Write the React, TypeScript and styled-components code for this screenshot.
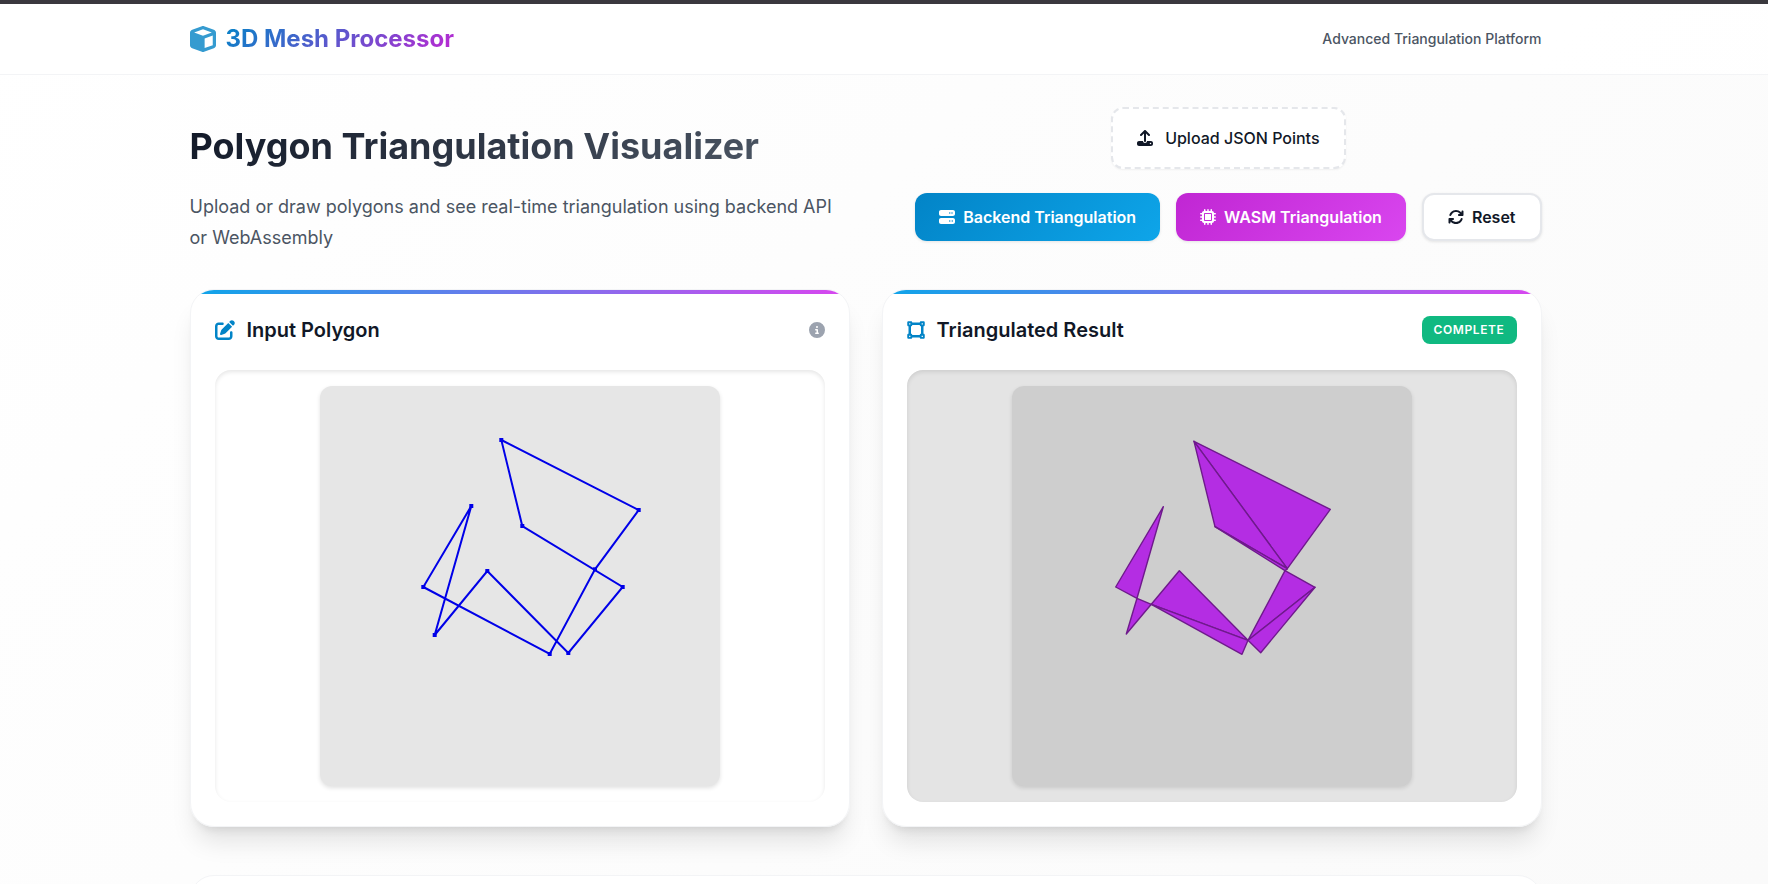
import React from "react";
import styled, { createGlobalStyle, css } from "styled-components";
import {
  FaArrowsRotate,
  FaCircleInfo,
  FaCube,
  FaMicrochip,
  FaPenToSquare,
  FaServer,
  FaUpload,
  FaVectorSquare,
} from "react-icons/fa6";

const GlobalStyle = createGlobalStyle`
  *, *::before, *::after { box-sizing: border-box; }
  body {
    margin: 0;
    font-family: Inter, "Liberation Sans", sans-serif;
    font-size: 16px;
    line-height: 1.6;
    color: #111827;
    background: #fdfdfd;
  }
  h1, h2, p { margin: 0; }
`;

const Page = styled.div`
  height: 100vh;
  min-height: 600px;
  overflow: hidden;
  border-top: 4px solid #3a383e;
  background: linear-gradient(135deg, #ffffff 0%, #fafafa 100%);
`;

const Header = styled.header`
  padding-right: 37px;
  background: rgba(255, 255, 255, 0.8);
  border-bottom: 1px solid #f3f4f6;
`;

const Container = styled.div`
  max-width: 1400px;
  margin: 0 auto;
  padding: 0 24px;
`;

const HeaderRow = styled(Container)`
  display: flex;
  align-items: center;
  justify-content: space-between;
  min-height: 70px;
`;

const Brand = styled.div`
  display: flex;
  align-items: center;
  gap: 10px;
  font-size: 24px;
  font-weight: 700;

  svg {
    width: 26px;
    height: 26px;
    color: #359bd0;
  }
`;

const BrandName = styled.span`
  color: transparent;
  background: linear-gradient(135deg, #0284c7, #c026d3);
  background-clip: text;
`;

const Tagline = styled.span`
  font-size: 14px;
  font-weight: 500;
  color: #4b5563;
`;

const Main = styled.main`
  padding: 32px 37px 0 0;
`;

const Hero = styled.section`
  display: flex;
  align-items: flex-start;
  justify-content: space-between;
  gap: 32px;
  margin-bottom: 36px;
`;

const Intro = styled.div`
  flex: 1;
  max-width: 660px;
  padding-top: 10px;
`;

const PageTitle = styled.h1`
  font-size: 36px;
  line-height: 58px;
  font-weight: 700;
  margin-bottom: 16px;
  width: fit-content;
  color: transparent;
  background: linear-gradient(135deg, #111827, #4b5563);
  background-clip: text;
`;

const Lead = styled.p`
  font-size: 18px;
  line-height: 31px;
  color: #4b5563;
`;

const Controls = styled.div`
  display: flex;
  flex-direction: column;
  align-items: center;
  gap: 24px;
`;

const controlFont = css`
  font-family: inherit;
  font-size: 16px;
  line-height: 24px;
  color: #111827;
  border-radius: 12px;
  display: flex;
  align-items: center;
  cursor: pointer;
`;

const UploadLabel = styled.label`
  ${controlFont}
  gap: 12px;
  height: 62px;
  padding: 0 24px;
  font-weight: 500;
  background: #ffffff;
  border: 2px dashed #e5e7eb;
  box-shadow: 0 1px 2px rgba(0, 0, 0, 0.05);

  input { display: none; }
`;

const ButtonRow = styled.div`
  display: flex;
  gap: 16px;
`;

const Button = styled.button<{ $variant: "primary" | "accent" | "plain" }>`
  ${controlFont}
  gap: 8px;
  height: 48px;
  padding: 0 24px;
  font-weight: 600;
  border: 0;
  box-shadow: 0 1px 3px rgba(0, 0, 0, 0.1);
  ${({ $variant }) =>
    $variant === "plain"
      ? css`
          background: #ffffff;
          border: 2px solid #e5e7eb;
        `
      : css`
          color: #ffffff;
          background: ${$variant === "primary"
            ? "linear-gradient(135deg, #0284c7, #0ea5e9)"
            : "linear-gradient(135deg, #c026d3, #d946ef)"};
        `}
`;

const Cards = styled.section`
  display: grid;
  grid-template-columns: 1fr 1fr;
  gap: 32px;
  margin-bottom: 48px;
`;

const cardSurface = css`
  background: rgba(255, 255, 255, 0.9);
  border: 1px solid #f3f4f6;
  border-radius: 24px;
`;

const Card = styled.article`
  ${cardSurface}
  position: relative;
  overflow: hidden;
  padding: 24px;
  box-shadow: 0 20px 25px -5px rgba(0, 0, 0, 0.1), 0 8px 10px -6px rgba(0, 0, 0, 0.1);

  &::before {
    content: "";
    position: absolute;
    inset: 0 0 auto;
    height: 4px;
    background: linear-gradient(90deg, #0ea5e9, #d946ef);
  }
`;

const DetailsCard = styled.section`
  ${cardSurface}
  min-height: 160px;
`;

const CardHeader = styled.div`
  display: flex;
  align-items: center;
  justify-content: space-between;
  height: 32px;
  margin-bottom: 24px;
`;

const CardTitle = styled.h2`
  display: flex;
  align-items: center;
  gap: 12px;
  font-size: 20px;
  line-height: 32px;
  font-weight: 600;

  svg { color: #0284c7; }
`;

const SquareIcon = styled(FaVectorSquare)`
  width: 18px;
`;

const InfoIcon = styled(FaCircleInfo)`
  color: #9ca3af;
`;

const Badge = styled.span`
  padding: 4px 12px;
  border-radius: 8px;
  font-size: 12px;
  line-height: 20px;
  font-weight: 600;
  letter-spacing: 0.05em;
  text-transform: uppercase;
  color: #ffffff;
  background: #10b981;
`;

const Stage = styled.div<{ $shaded?: boolean }>`
  display: flex;
  justify-content: center;
  padding: 16px;
  border-radius: 16px;
  background: ${({ $shaded }) => ($shaded ? "#e4e4e4" : "#ffffff")};
  box-shadow: inset 0 2px 4px rgba(0, 0, 0, 0.1);
`;

const Drawing = styled.svg<{ $shaded?: boolean }>`
  display: block;
  width: 400px;
  height: 400px;
  border-radius: 12px;
  background: ${({ $shaded }) => ($shaded ? "#cecece" : "#e6e6e6")};
  box-shadow: 0 2px 4px rgba(0, 0, 0, 0.12);
`;

type Point = [number, number];

const outline: Point[] = [
  [181.3, 54], [318.7, 124], [275, 183.3], [229.7, 268], [103.3, 201], [151.3, 120],
  [114.7, 249], [167.3, 185], [248.3, 267], [302.7, 201], [202.3, 140],
];

const triangles: Point[][] = [
  [[182, 55.3], [318.3, 123.3], [275.3, 182.7]],
  [[182, 55.3], [275.3, 182.7], [203, 140.7]],
  [[203, 140.7], [275.3, 182.7], [273, 184.7]],
  [[273, 184.7], [303, 201.3], [236, 254.3]],
  [[303, 201.3], [236, 254.3], [248.7, 266.7]],
  [[167.3, 184.7], [139.3, 218.3], [236, 254.3]],
  [[139.3, 218.3], [236, 254.3], [230, 268.3]],
  [[151.3, 120.7], [103.7, 201], [125, 212.3]],
  [[125, 212.3], [139.3, 218.3], [114.3, 248]],
];

const toPoints = (points: Point[]) => points.map((p) => p.join(",")).join(" ");

export default function App() {
  return (
    <>
      <GlobalStyle />
      <Page>
        <Header>
          <HeaderRow>
            <Brand>
              <FaCube />
              <BrandName>3D Mesh Processor</BrandName>
            </Brand>
            <Tagline>Advanced Triangulation Platform</Tagline>
          </HeaderRow>
        </Header>
        <Main>
          <Container>
            <Hero>
              <Intro>
                <PageTitle>Polygon Triangulation Visualizer</PageTitle>
                <Lead>
                  Upload or draw polygons and see real-time triangulation using backend API or
                  WebAssembly
                </Lead>
              </Intro>
              <Controls>
                <UploadLabel>
                  <FaUpload />
                  Upload JSON Points
                  <input type="file" accept=".json" />
                </UploadLabel>
                <ButtonRow>
                  <Button type="button" $variant="primary">
                    <FaServer />
                    Backend Triangulation
                  </Button>
                  <Button type="button" $variant="accent">
                    <FaMicrochip />
                    WASM Triangulation
                  </Button>
                  <Button type="button" $variant="plain">
                    <FaArrowsRotate />
                    Reset
                  </Button>
                </ButtonRow>
              </Controls>
            </Hero>
            <Cards>
              <Card>
                <CardHeader>
                  <CardTitle>
                    <FaPenToSquare />
                    Input Polygon
                  </CardTitle>
                  <InfoIcon />
                </CardHeader>
                <Stage>
                  <Drawing viewBox="0 0 400 400">
                    <polygon points={toPoints(outline)} fill="none" stroke="#0000e8" strokeWidth="2" />
                    {outline.map(([x, y]) => (
                      <rect key={`${x}-${y}`} x={x - 2} y={y - 2} width="4" height="4" fill="#0000e8" />
                    ))}
                  </Drawing>
                </Stage>
              </Card>
              <Card>
                <CardHeader>
                  <CardTitle>
                    <SquareIcon />
                    Triangulated Result
                  </CardTitle>
                  <Badge>Complete</Badge>
                </CardHeader>
                <Stage $shaded>
                  <Drawing $shaded viewBox="0 0 400 400">
                    {triangles.map((t, i) => (
                      <polygon
                        key={i}
                        points={toPoints(t)}
                        fill="#b42de3"
                        stroke="#6f1a8c"
                        strokeWidth="1.4"
                        strokeLinejoin="round"
                      />
                    ))}
                  </Drawing>
                </Stage>
              </Card>
            </Cards>
            <DetailsCard />
          </Container>
        </Main>
      </Page>
    </>
  );
}
